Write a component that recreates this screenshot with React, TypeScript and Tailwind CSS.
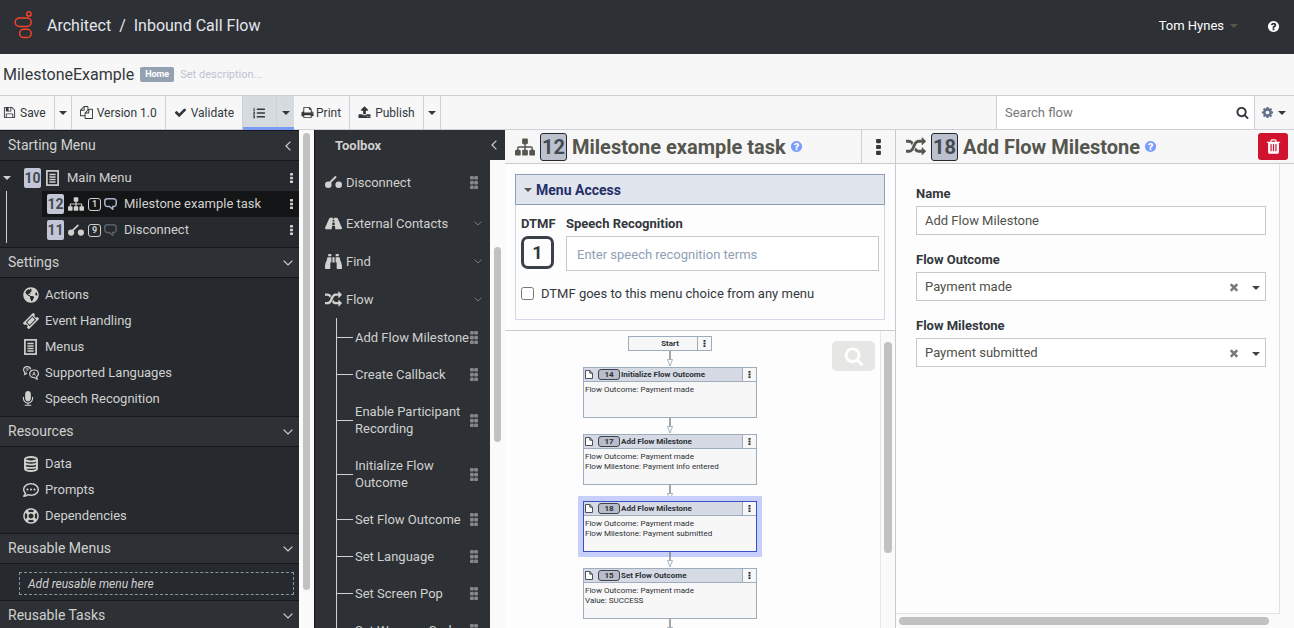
import React from "react";
import { FaGlobeAmericas, FaRoad, FaBinoculars, FaRegLifeRing, FaListOl, FaRegCommentDots } from "react-icons/fa";

type IconProps = { className?: string };

const glyphs = {
  search:
    "M1216 832q0-185-131.5-316.5T768 384 451.5 515.5 320 832t131.5 316.5T768 1280t316.5-131.5T1216 832zm512 832q0 52-38 90t-90 38q-54 0-90-38l-343-342q-179 124-399 124-143 0-273.5-55.5t-225-150-150-225T64 832t55.5-273.5 150-225 225-150T768 128t273.5 55.5 225 150 150 225T1472 832q0 220-124 399l343 343q37 37 37 90z",
  times:
    "M1490 1322q0 40-28 68l-136 136q-28 28-68 28t-68-28l-294-294-294 294q-28 28-68 28t-68-28l-136-136q-28-28-28-68t28-68l294-294-294-294q-28-28-28-68t28-68l136-136q28-28 68-28t68 28l294 294 294-294q28-28 68-28t68 28l136 136q28 28 28 68t-28 68l-294 294 294 294q28 28 28 68z",
  random:
    "M666 481q-60 92-137 273-22-45-37-72.5t-40.5-63.5-51-56.5-63-35-81.5-14.5h-224q-14 0-23-9t-9-23v-192q0-14 9-23t23-9h224q250 0 410 225zm1126 799q0 14-9 23l-320 320q-9 9-23 9-13 0-22.5-9.5t-9.5-22.5v-192q-32 0-85 .5t-81 1-73-1-71-5-64-10.5-63-18.5-58-28.5-59-40-55-53.5-56-69.5q59-93 136-273 22 45 37 72.5t40.5 63.5 51 56.5 63 35 81.5 14.5h256v-192q0-14 9-23t23-9q12 0 24 10l319 319q9 9 9 23zm0-896q0 14-9 23l-320 320q-9 9-23 9-13 0-22.5-9.5t-9.5-22.5v-192h-256q-48 0-87 15t-69 45-51 61.5-45 77.5q-32 62-78 171-29 66-49.5 111t-54 105-64 100-74 83-90 68.5-106.5 42-128 16.5h-224q-14 0-23-9t-9-23v-192q0-14 9-23t23-9h224q48 0 87-15t69-45 51-61.5 45-77.5q32-62 78-171 29-66 49.5-111t54-105 64-100 74-83 90-68.5 106.5-42 128-16.5h256v-192q0-14 9-23t23-9q12 0 24 10l319 319q9 9 9 23z",
  sitemap:
    "M1792 1248v320q0 40-28 68t-68 28h-320q-40 0-68-28t-28-68v-320q0-40 28-68t68-28h96v-192h-512v192h96q40 0 68 28t28 68v320q0 40-28 68t-68 28h-320q-40 0-68-28t-28-68v-320q0-40 28-68t68-28h96v-192h-512v192h96q40 0 68 28t28 68v320q0 40-28 68t-68 28h-320q-40 0-68-28t-28-68v-320q0-40 28-68t68-28h96v-192q0-52 38-90t90-38h512v-192h-96q-40 0-68-28t-28-68v-320q0-40 28-68t68-28h320q40 0 68 28t28 68v320q0 40-28 68t-68 28h-96v192h512q52 0 90 38t38 90v192h96q40 0 68 28t28 68z",
  help: "M1024 1376v-192q0-14-9-23t-23-9h-192q-14 0-23 9t-9 23v192q0 14 9 23t23 9h192q14 0 23-9t9-23zm256-672q0-88-55.5-163t-138.5-116-170-41q-243 0-371 213-15 24 8 42l132 100q7 6 19 6 16 0 25-12 53-68 86-92 34-24 86-24 48 0 85.5 26t37.5 59q0 38-20 61t-68 45q-63 28-115.5 86.5t-52.5 125.5v36q0 14 9 23t23 9h192q14 0 23-9t9-23q0-19 21.5-49.5t54.5-49.5q32-18 49-28.5t46-35 44.5-48 28-60.5 12.5-81zm384 192q0 209-103 385.5t-279.5 279.5-385.5 103-385.5-103-279.5-279.5-103-385.5 103-385.5 279.5-279.5 385.5-103 385.5 103 279.5 279.5 103 385.5z",
  trash:
    "M704 1376v-704q0-14-9-23t-23-9h-64q-14 0-23 9t-9 23v704q0 14 9 23t23 9h64q14 0 23-9t9-23zm256 0v-704q0-14-9-23t-23-9h-64q-14 0-23 9t-9 23v704q0 14 9 23t23 9h64q14 0 23-9t9-23zm256 0v-704q0-14-9-23t-23-9h-64q-14 0-23 9t-9 23v704q0 14 9 23t23 9h64q14 0 23-9t9-23zm-544-992h448l-48-117q-7-9-17-11h-317q-10 2-17 11zm928 32v64q0 14-9 23t-23 9h-96v948q0 83-47 143.5t-113 60.5h-832q-66 0-113-58.5t-47-141.5v-952h-96q-14 0-23-9t-9-23v-64q0-14 9-23t23-9h309l70-167q15-37 54-63t79-26h320q40 0 79 26t54 63l70 167h309q14 0 23 9t9 23z",
  check:
    "M1671 566q0 40-28 68l-724 724-136 136q-28 28-68 28t-68-28l-136-136-362-362q-28-28-28-68t28-68l136-136q28-28 68-28t68 28l294 295 656-657q28-28 68-28t68 28l136 136q28 28 28 68z",
  upload:
    "M1344 1472q0-26-19-45t-45-19-45 19-19 45 19 45 45 19 45-19 19-45zm256 0q0-26-19-45t-45-19-45 19-19 45 19 45 45 19 45-19 19-45zm128-224v320q0 40-28 68t-68 28h-1472q-40 0-68-28t-28-68v-320q0-40 28-68t68-28h427q21 56 70.5 92t110.5 36h256q61 0 110.5-36t70.5-92h427q40 0 68 28t28 68zm-325-648q-17 40-59 40h-256v448q0 26-19 45t-45 19h-256q-26 0-45-19t-19-45v-448h-256q-42 0-59-40-17-39 14-69l448-448q18-19 45-19t45 19l448 448q31 30 14 69z",
  save: "M512 1536h768v-384h-768v384zm896 0h128v-896q0-14-10-38.5t-20-34.5l-281-281q-10-10-34-20t-39-10v416q0 40-28 68t-68 28h-576q-40 0-68-28t-28-68v-416h-128v1280h128v-416q0-40 28-68t68-28h832q40 0 68 28t28 68v416zm-384-928v-320q0-13-9.5-22.5t-22.5-9.5h-192q-13 0-22.5 9.5t-9.5 22.5v320q0 13 9.5 22.5t22.5 9.5h192q13 0 22.5-9.5t9.5-22.5zm640 32v928q0 40-28 68t-68 28h-1344q-40 0-68-28t-28-68v-1344q0-40 28-68t68-28h928q40 0 88 20t76 48l280 280q28 28 48 76t20 88z",
  print:
    "M448 1536h896v-256h-896v256zm0-640h896v-384h-160q-40 0-68-28t-28-68v-160h-640v640zm1152 64q0-26-19-45t-45-19-45 19-19 45 19 45 45 19 45-19 19-45zm128 0v416q0 13-9.5 22.5t-22.5 9.5h-224v160q0 40-28 68t-68 28h-960q-40 0-68-28t-28-68v-160h-224q-13 0-22.5-9.5t-9.5-22.5v-416q0-79 56.5-135.5t135.5-56.5h64v-544q0-40 28-68t68-28h672q40 0 88 20t76 48l152 152q28 28 48 76t20 88v256h64q79 0 135.5 56.5t56.5 135.5z",
  files:
    "M1696 384q40 0 68 28t28 68v1216q0 40-28 68t-68 28h-960q-40 0-68-28t-28-68v-288h-544q-40 0-68-28t-28-68v-672q0-40 20-88t48-76l408-408q28-28 76-48t88-20h416q40 0 68 28t28 68v328q68-40 128-40h416zm-544 213l-299 299h299v-299zm-640-384l-299 299h299v-299zm196 647l316-316v-416h-384v416q0 40-28 68t-68 28h-416v640h512v-256q0-40 20-88t48-76zm956 804v-1152h-384v416q0 40-28 68t-68 28h-416v640h896z",
  cog: "M1152 896q0-106-75-181t-181-75-181 75-75 181 75 181 181 75 181-75 75-181zm512-109v222q0 12-8 23t-20 13l-185 28q-19 54-39 91 35 50 107 138 10 12 10 25t-9 23q-27 37-99 108t-94 71q-12 0-26-9l-138-108q-44 23-91 38-16 136-29 186-7 28-36 28h-222q-14 0-24.5-8.5t-11.5-21.5l-28-184q-49-16-90-37l-141 107q-10 9-25 9-14 0-25-11-126-114-165-168-7-10-7-23 0-12 8-23 15-21 51-66.5t54-70.5q-27-50-41-99l-183-27q-13-2-21-12.5t-8-23.5v-222q0-12 8-23t19-13l186-28q14-46 39-92-40-57-107-138-10-12-10-24 0-10 9-23 26-36 98.5-107.5t94.5-71.5q13 0 26 10l138 107q44-23 91-38 16-136 29-186 7-28 36-28h222q14 0 24.5 8.5t11.5 21.5l28 184q49 16 90 37l142-107q9-9 24-9 13 0 25 10 129 119 165 170 7 8 7 22 0 12-8 23-15 21-51 66.5t-54 70.5q26 50 41 98l183 28q13 2 21 12.5t8 23.5z",
  microphone:
    "M1472 704v128q0 221-147.5 384.5t-364.5 187.5v132h256q26 0 45 19t19 45-19 45-45 19h-640q-26 0-45-19t-19-45 19-45 45-19h256v-132q-217-24-364.5-187.5t-147.5-384.5v-128q0-26 19-45t45-19 45 19 19 45v128q0 185 131.5 316.5t316.5 131.5 316.5-131.5 131.5-316.5v-128q0-26 19-45t45-19 45 19 19 45zm-256-384v512q0 132-94 226t-226 94-226-94-94-226v-512q0-132 94-226t226-94 226 94 94 226z",
};

function Glyph({ name, className }: { name: keyof typeof glyphs; className?: string }) {
  return (
    <svg viewBox="0 0 1792 1792" fill="currentColor" aria-hidden="true" className={className}>
      <path d={glyphs[name]} />
    </svg>
  );
}

function Logo() {
  return (
    <svg viewBox="0 0 20 30" fill="none" stroke="#f5432a" strokeWidth="1.5" className="h-[30px] w-5 shrink-0" aria-hidden="true">
      <circle cx="15.900" cy="2.900" r="2.200" />
      <rect x="2.200" y="7" width="16" height="8.400" rx="4.200" />
      <rect x="6.600" y="18.200" width="11.600" height="8.400" rx="4.200" />
    </svg>
  );
}

function Caret({ className = "" }: IconProps) {
  return (
    <svg viewBox="0 0 8 4" fill="currentColor" className={"h-1 w-2 shrink-0 " + className} aria-hidden="true">
      <path d="M0 0h8L4 4z" />
    </svg>
  );
}

function Chevron({ className = "" }: IconProps) {
  return (
    <svg viewBox="0 0 10 6" fill="none" stroke="currentColor" strokeWidth="1.2" className={"shrink-0 " + className} aria-hidden="true">
      <path d="M.6.6 5 5 9.4.6" />
    </svg>
  );
}

function ChevronLeft() {
  return (
    <svg viewBox="0 0 6 10" fill="none" stroke="currentColor" strokeWidth="1.2" className="h-[10px] w-[6px] shrink-0" aria-hidden="true">
      <path d="M5.4.6 1 5l4.4 4.4" />
    </svg>
  );
}

function Dots({ className = "h-[10px] w-[3px]" }: IconProps) {
  return (
    <svg viewBox="0 0 3 10" fill="currentColor" className={"shrink-0 " + className} aria-hidden="true">
      <rect width="3" height="2.6" rx=".5" />
      <rect y="3.7" width="3" height="2.6" rx=".5" />
      <rect y="7.4" width="3" height="2.6" rx=".5" />
    </svg>
  );
}

function Grip() {
  return (
    <svg viewBox="0 0 8 13" fill="#85888a" className="h-[13px] w-2 shrink-0" aria-hidden="true">
      {[0, 4.8, 9.6].map((y) => (
        <g key={y}>
          <rect y={y} width="3.8" height="3.6" rx="1.2" />
          <rect x="4.200" y={y} width="3.8" height="3.6" rx="1.2" />
        </g>
      ))}
    </svg>
  );
}

function MenuIcon({ className = "" }: IconProps) {
  return (
    <svg viewBox="0 0 13 16" fill="none" stroke="currentColor" className={className} aria-hidden="true">
      <rect x=".9" y=".9" width="11.200" height="14.200" strokeWidth="1.7" />
      <path d="M3.4 4.500h6.200M3.400 7h6.200M3.400 9.500h6.200M3.400 12h6.200" strokeWidth="1.300" />
    </svg>
  );
}

function TicketIcon({ className = "" }: IconProps) {
  return (
    <svg viewBox="0 0 16 16" className={className} aria-hidden="true">
      <g transform="rotate(-45 8 8)">
        <path
          fill="currentColor"
          fillRule="evenodd"
          d="M.6 3.700h14.800v2.600a1.700 1.700 0 0 0 0 3.400v2.600H.6V9.700a1.700 1.700 0 0 0 0-3.400zM3.400 5.300v5.400h9.200V5.300zM4.300 6.200h7.400v3.600H4.300z"
        />
      </g>
    </svg>
  );
}

function LanguagesIcon({ className = "" }: IconProps) {
  return (
    <svg viewBox="0 0 16 14" fill="none" stroke="currentColor" strokeWidth="1.2" className={className} aria-hidden="true">
      <path d="M7.600 3.400C7.300 1.700 5.900.7 4.100.7 2.100.7.6 2 .6 3.900c0 1 .5 1.800 1.300 2.400L1.600 8.400 4 7.100" />
      <path d="M2.600 3h3M4.100 2.200v.8M5.300 3c-.4 1.300-1.300 2-2.300 2.300" strokeWidth=".8" />
      <path d="M11 4c2.500 0 4.400 1.500 4.400 3.700 0 1.300-.7 2.300-1.800 3l.5 2.500-2.900-1.700c-2.500 0-4.500-1.500-4.500-3.800S8.500 4 11 4z" />
      <path d="M9.600 9.500 11 5.900l1.400 3.600M10.100 8.400h1.800" strokeWidth=".8" />
    </svg>
  );
}

function DatabaseIcon({ className = "" }: IconProps) {
  return (
    <svg viewBox="0 0 14 16" fill="none" stroke="currentColor" strokeWidth="1.900" className={className} aria-hidden="true">
      <ellipse cx="7" cy="3.200" rx="6" ry="2.200" />
      <path d="M1 3.200v9.600c0 1.200 2.700 2.200 6 2.200s6-1 6-2.200V3.200M1 6.600c0 1.200 2.700 2 6 2s6-.8 6-2M1 9.900c0 1.200 2.700 2 6 2s6-.8 6-2" />
    </svg>
  );
}

function DisconnectIcon({ className = "" }: IconProps) {
  return (
    <svg viewBox="0 0 17 12" fill="currentColor" className={className} aria-hidden="true">
      <circle cx="3.300" cy="8.700" r="3.300" />
      <circle cx="13.700" cy="8.700" r="3.300" />
      <path d="M4 7.500 10.500 1" stroke="currentColor" strokeWidth="1.800" strokeLinecap="round" />
    </svg>
  );
}

function SpeechIcon({ className = "" }: IconProps) {
  return (
    <svg viewBox="0 0 13 12" fill="none" stroke="currentColor" strokeWidth="1.500" className={"shrink-0 " + className} aria-hidden="true">
      <path d="M3.300.8h6.400a2.500 2.500 0 0 1 2.500 2.500v2.600a2.500 2.500 0 0 1-2.500 2.500H8.700v2.800L5.500 8.400H3.300A2.500 2.500 0 0 1 .8 5.900V3.300A2.500 2.500 0 0 1 3.300.8z" />
    </svg>
  );
}

function DocIcon() {
  return (
    <svg viewBox="0 0 8 9" fill="#fff" stroke="#3a3f46" strokeWidth=".9" className="h-[9px] w-2 shrink-0" aria-hidden="true">
      <path d="M.5.5h4.300l2.700 2.700v5.300h-7zM4.800.5v2.700h2.700" />
    </svg>
  );
}

function SmallBadge({ children }: { children: string }) {
  return (
    <span className="flex h-5 w-[17px] shrink-0 items-center justify-center rounded-xs bg-[#c2c6d6] text-sm font-bold text-[#444a52]">
      {children}
    </span>
  );
}

function BigBadge({ children }: { children: string }) {
  return (
    <span className="flex h-7 w-[27px] shrink-0 items-center justify-center rounded-[3px] border border-[#23282e] bg-[#bcc1ce] text-xl font-bold text-[#444a52]">
      {children}
    </span>
  );
}

function Digit({ children }: { children: string }) {
  return (
    <span className="flex size-[13px] shrink-0 items-center justify-center rounded-[3px] border border-[#cfcfcd] text-[9px] leading-none font-bold">
      {children}
    </span>
  );
}

function SectionHeader({ title, start }: { title: string; start?: boolean }) {
  return (
    <button type="button" className="flex h-[31px] w-full shrink-0 items-center justify-between border-y border-[#15171a] bg-[#2d3035] pr-[6px] pl-2 text-sm">
      <span className="pb-[2px]">{title}</span>
      {start ? <span className="pr-[2px]"><ChevronLeft /></span> : <Chevron className="h-[6px] w-[10px]" />}
    </button>
  );
}

function NavItem({ icon, label }: { icon: React.ReactNode; label: string }) {
  return (
    <li>
      <a href="#" className="flex h-[26px] items-center gap-[6px] pl-[23px]">
        <span className="flex w-4 shrink-0">{icon}</span>
        {label}
      </a>
    </li>
  );
}

function Sidebar() {
  return (
    <nav aria-label="Flow" className="flex w-[299px] shrink-0 flex-col overflow-hidden bg-[#26292e] text-[13px] text-[#d0d0ce]">
      <SectionHeader title="Starting Menu" start />
      <div className="py-1">
        <div className="flex h-[26px] items-center pr-[6px] pl-[3px]">
          <Caret />
          <span className="ml-[13px] flex"><SmallBadge>10</SmallBadge></span>
          <MenuIcon className="ml-[5px] h-4 w-[13px]" />
          <span className="ml-2 grow">Main Menu</span>
          <Dots />
        </div>
        <div className="ml-[6px] border-l border-[#d0d0ce] pl-[35px]">
          <div className="flex h-[26px] items-center bg-[#141517] pr-[6px] pl-[5px]">
            <SmallBadge>12</SmallBadge>
            <Glyph name="sitemap" className="ml-1 size-4" />
            <span className="ml-1"><Digit>1</Digit></span>
            <SpeechIcon className="ml-[3px] h-3 w-[13px] text-[#a7b5cb]" />
            <span className="ml-[7px] grow">Milestone example task</span>
            <Dots />
          </div>
          <div className="flex h-[26px] items-center pr-[6px] pl-[5px]">
            <SmallBadge>11</SmallBadge>
            <DisconnectIcon className="ml-1 h-3 w-4" />
            <span className="ml-1"><Digit>9</Digit></span>
            <SpeechIcon className="ml-[3px] h-3 w-[13px] text-[#596069]" />
            <span className="ml-[7px] grow">Disconnect</span>
            <Dots />
          </div>
        </div>
      </div>
      <SectionHeader title="Settings" />
      <ul className="py-1">
        <NavItem icon={<FaGlobeAmericas className="size-4" />} label="Actions" />
        <NavItem icon={<TicketIcon className="size-4" />} label="Event Handling" />
        <NavItem icon={<MenuIcon className="ml-px h-4 w-[13px]" />} label="Menus" />
        <NavItem icon={<LanguagesIcon className="h-[14px] w-4" />} label="Supported Languages" />
        <NavItem icon={<Glyph name="microphone" className="-ml-[3px] size-4" />} label="Speech Recognition" />
      </ul>
      <SectionHeader title="Resources" />
      <ul className="py-1">
        <NavItem icon={<DatabaseIcon className="ml-px h-4 w-[14px]" />} label="Data" />
        <NavItem icon={<FaRegCommentDots className="size-4" />} label="Prompts" />
        <NavItem icon={<FaRegLifeRing className="size-4" />} label="Dependencies" />
      </ul>
      <SectionHeader title="Reusable Menus" />
      <div className="pt-2 pr-[5px] pb-[5px] pl-[19px]">
        <div className="flex h-[23px] items-center border border-dashed border-[#8a95a3] pl-2 text-xs italic">Add reusable menu here</div>
      </div>
      <SectionHeader title="Reusable Tasks" />
    </nav>
  );
}

function ToolboxGroup({ icon, label, end }: { icon: React.ReactNode; label: string; end: React.ReactNode }) {
  return (
    <div className="flex h-[38px] shrink-0 items-center gap-1 pr-2 pl-[10px]">
      <span className="flex w-[17px] shrink-0 justify-center">{icon}</span>
      <span className="grow">{label}</span>
      {end}
    </div>
  );
}

const tools = [
  "Add Flow Milestone",
  "Create Callback",
  "Enable Participant Recording",
  "Initialize Flow Outcome",
  "Set Flow Outcome",
  "Set Language",
  "Set Screen Pop",
  "Set Wrap-up Code",
];

function Toolbox() {
  const chevron = <Chevron className="h-[5px] w-2 text-[#7c8084]" />;
  return (
    <aside className="flex w-[191px] shrink-0 flex-col text-[13px] leading-[17px] text-[#d0d0ce]">
      <div className="flex h-[30px] shrink-0 items-center justify-between border-l border-[#15171a] bg-[#2d3035] pr-2 pl-5">
        <h2 className="font-bold">Toolbox</h2>
        <ChevronLeft />
      </div>
      <div className="flex min-h-0 grow">
        <div className="flex min-w-0 grow flex-col overflow-hidden border-l border-[#15171a] bg-[#2d3035]">
          <div className="py-[3px]">
            <ToolboxGroup icon={<DisconnectIcon className="h-3 w-[17px]" />} label="Disconnect" end={<span className="pr-1"><Grip /></span>} />
          </div>
          <ToolboxGroup icon={<FaRoad className="size-[17px]" />} label="External Contacts" end={chevron} />
          <ToolboxGroup icon={<FaBinoculars className="size-[17px]" />} label="Find" end={chevron} />
          <ToolboxGroup icon={<Glyph name="random" className="size-[17px]" />} label="Flow" end={chevron} />
          <ul className="ml-[21px] border-l border-[#d0d0ce] pt-px">
            {tools.map((t) => (
              <li key={t} className="flex items-center py-[10px] pr-3">
                <span className="h-px w-4 shrink-0 bg-[#d0d0ce]" />
                <span className="ml-[2px] w-[115px] shrink-0">{t}</span>
                <Grip />
              </li>
            ))}
          </ul>
        </div>
        <div className="w-[15px] shrink-0 bg-[#fafafa] px-1 pt-[87px]">
          <div className="h-[195px] rounded-full bg-[#c1c1c1]" />
        </div>
      </div>
    </aside>
  );
}

function ToolButton({ children, label, className = "gap-1 px-2" }: { children: React.ReactNode; label?: string; className?: string }) {
  return (
    <button type="button" aria-label={label} className={"flex items-center border-r border-[#cdd2da] " + className}>
      {children}
    </button>
  );
}

function Toolbar() {
  return (
    <div className="flex h-[35px] shrink-0 border-y border-[#cdd0d6] text-xs text-[#33383d]">
      <ToolButton className="gap-1 pr-2 pl-[3px]">
        <Glyph name="save" className="size-[13px]" />
        Save
      </ToolButton>
      <ToolButton className="px-1" label="Save options"><Caret /></ToolButton>
      <ToolButton><Glyph name="files" className="size-[13px]" />Version 1.0</ToolButton>
      <ToolButton><Glyph name="check" className="size-[13px]" />Validate</ToolButton>
      <div className="-mb-px flex border-b-[3px] border-[#7a9bf5] bg-[#d6dbe0]">
        <ToolButton className="pr-[11px] pl-[10px] pt-[2px]" label="View list"><FaListOl className="size-3" /></ToolButton>
        <button type="button" aria-label="View options" className="flex items-center pt-[2px] pr-1 pl-[5px]"><Caret /></button>
      </div>
      <ToolButton className="gap-[2px] pr-2 pl-[7px]"><Glyph name="print" className="size-[13px]" />Print</ToolButton>
      <ToolButton><Glyph name="upload" className="size-[13px]" />Publish</ToolButton>
      <ToolButton className="px-1" label="Publish options"><Caret /></ToolButton>
      <label className="ml-auto flex w-[259px] items-center border-x border-[#cdd2da] bg-white pr-[5px] pl-2 text-[13px]">
        <input type="search" placeholder="Search flow" aria-label="Search flow" className="min-w-0 grow outline-none placeholder:text-[#777]" />
        <Glyph name="search" className="size-[13px]" />
      </label>
      <button type="button" aria-label="Settings" className="flex items-center gap-1 pr-2 pl-[6px]">
        <Glyph name="cog" className="size-[13px] text-[#62708a]" />
        <Caret />
      </button>
    </div>
  );
}

function PanelTitle({ icon, badge, title }: { icon: keyof typeof glyphs; badge: string; title: string }) {
  return (
    <div className="flex items-center pl-[10px] text-[#55564d]">
      <Glyph name={icon} className="size-5" />
      <span className="ml-[5px]"><BigBadge>{badge}</BigBadge></span>
      <h2 className="ml-[5px] text-xl leading-7 font-bold">{title}</h2>
      <Glyph name="help" className="ml-1 size-[13px] text-[#7a9bff]" />
    </div>
  );
}

function MenuAccess() {
  return (
    <section className="m-[10px] flex h-[146px] shrink-0 flex-col border border-[#d2d8e8] text-[13px]">
      <h3 className="-mx-px -mt-px flex h-[31px] shrink-0 items-center gap-1 border border-[#8d9db5] bg-[#e1e5ee] pl-2 text-sm font-bold text-[#242f68]">
        <Caret className="text-[#55564d]" />
        Menu Access
      </h3>
      <div className="flex gap-3 px-[5px] pt-[10px]">
        <div className="flex w-[33px] shrink-0 flex-col gap-1">
          <span className="leading-[17px] font-bold">DTMF</span>
          <button type="button" className="flex size-[33px] items-center justify-center rounded-[7px] border-[3px] border-[#3b4148] text-lg font-bold">1</button>
        </div>
        <div className="flex grow flex-col gap-1">
          <label htmlFor="terms" className="leading-[17px] font-bold">Speech Recognition</label>
          <input id="terms" placeholder="Enter speech recognition terms" className="h-[35px] border border-[#c8c8c8] bg-white px-[10px] pt-px outline-none placeholder:text-[#8fa0b5]" />
        </div>
      </div>
      <label className="mt-[13px] flex items-center gap-[7px] pl-[5px]">
        <input type="checkbox" className="size-[13px]" />
        DTMF goes to this menu choice from any menu
      </label>
    </section>
  );
}

function Connector() {
  return (
    <svg viewBox="0 0 8 16" className="h-4 w-2" aria-hidden="true">
      <path d="M4 0v9" stroke="#84898d" strokeWidth="1.500" />
      <path d="M1.500 8.500h5L4 15z" fill="#fff" stroke="#9aabb9" strokeWidth=".9" />
    </svg>
  );
}

function FlowNode({ id, title, lines, selected }: { id: string; title: string; lines: string[]; selected?: boolean }) {
  return (
    <div className={"h-[51px] w-[174px] border bg-[#f7f7f7] " + (selected ? "border-[#3c4fc4] outline-5 outline-[#c6d0fb]" : "border-[#9dadbd]")}>
      <div className="flex h-[14px] items-center border-b border-[#9dadbd] bg-[#d5dae5] pl-px font-bold">
        <DocIcon />
        <span className="ml-[5px] flex h-[11px] w-[22px] items-center justify-center rounded-[3px] border border-[#3f444b] bg-[#b9bccb]">{id}</span>
        <span className="grow pl-px">{title}</span>
        <button type="button" aria-label="Node menu" className="flex h-[13px] w-[14px] items-center justify-center border-l border-[#9dadbd] bg-[#f7f7f7]">
          <Dots className="h-[7px] w-[3px]" />
        </button>
      </div>
      <div className="px-px pt-[3px]">
        {lines.map((l) => <p key={l}>{l}</p>)}
      </div>
    </div>
  );
}

const nodes = [
  { id: "14", title: "Initialize Flow Outcome", lines: ["Flow Outcome: Payment made"] },
  { id: "17", title: "Add Flow Milestone", lines: ["Flow Outcome: Payment made", "Flow Milestone: Payment info entered"] },
  { id: "18", title: "Add Flow Milestone", lines: ["Flow Outcome: Payment made", "Flow Milestone: Payment submitted"], selected: true },
  { id: "15", title: "Set Flow Outcome", lines: ["Flow Outcome: Payment made", "Value: SUCCESS"] },
];

function Canvas() {
  return (
    <div className="flex min-h-0 grow border-t border-[#c9cacc]">
      <div className="relative min-w-0 grow overflow-hidden pt-[5px] pl-[78px]">
        <div className="flex w-[174px] flex-col items-center text-[8px] leading-[10px] text-[#2b3035]">
          <div className="flex h-[15px] w-[84px] border border-[#9dadbd] bg-[#f7f7f7] font-bold">
            <span className="flex grow items-center justify-center pl-[14px]">Start</span>
            <button type="button" aria-label="Start menu" className="flex w-[14px] items-center justify-center border-l border-[#9dadbd]">
              <Dots className="h-[7px] w-[3px]" />
            </button>
          </div>
          <Connector />
          {nodes.map((n) => (
            <React.Fragment key={n.id}>
              <FlowNode {...n} />
              <Connector />
            </React.Fragment>
          ))}
        </div>
        <button type="button" aria-label="Zoom" className="absolute top-[10px] right-[5px] flex h-[30px] w-[43px] items-center justify-center rounded-[5px] bg-[#e6e6e5] text-white">
          <Glyph name="search" className="size-5" />
        </button>
      </div>
      <div className="w-[15px] shrink-0 border-l border-[#e6e6e6] bg-[#fafafa] pt-[11px] pr-[3px] pl-[3px]">
        <div className="h-[211px] rounded-full bg-[#c1c1c1]" />
      </div>
    </div>
  );
}

function Dropdown({ id, label, value }: { id: string; label: string; value: string }) {
  return (
    <div className="flex flex-col gap-1">
      <label htmlFor={id} className="leading-[17px] font-bold text-[#33383d]">{label}</label>
      <div className="relative flex h-[29px] border border-[#c8c8c8] bg-white">
        <select id={id} defaultValue={value} className="w-full appearance-none px-2 pt-px outline-none">
          <option>{value}</option>
        </select>
        <button type="button" aria-label={"Clear " + label} className="absolute top-[8px] right-[25px] text-[#7c7c7c]">
          <Glyph name="times" className="size-3" />
        </button>
        <Caret className="pointer-events-none absolute top-[13px] right-[5px] text-[#44453d]" />
      </div>
    </div>
  );
}

function Details() {
  return (
    <section className="flex w-[399px] shrink-0 flex-col border-l border-[#c9cacc] bg-[#fafafa]">
      <header className="flex h-[34px] shrink-0 items-center justify-between border-b border-[#c9cacc] bg-[#f7f7f7] pr-[6px]">
        <PanelTitle icon="random" badge="18" title="Add Flow Milestone" />
        <button type="button" aria-label="Delete" className="flex h-[27px] w-[30px] items-center justify-center rounded-[3px] bg-[#d0142f] text-white">
          <Glyph name="trash" className="size-[17px]" />
        </button>
      </header>
      <form className="mr-[14px] flex grow flex-col gap-4 border-r border-b border-[#e3e3e3] bg-[#fdfdfd] pt-[21px] pr-[13px] pl-5 text-[13px] text-[#50514a]">
        <div className="flex flex-col gap-1">
          <label htmlFor="name" className="leading-[17px] font-bold text-[#33383d]">Name</label>
          <input id="name" defaultValue="Add Flow Milestone" className="h-[29px] border border-[#c8c8c8] bg-white px-2 outline-none" />
        </div>
        <Dropdown id="outcome" label="Flow Outcome" value="Payment made" />
        <Dropdown id="milestone" label="Flow Milestone" value="Payment submitted" />
      </form>
      <div className="shrink-0 pt-[3px] pr-[25px] pb-[3px] pl-[3px]">
        <div className="h-2 rounded-full bg-[#c1c1c1]" />
      </div>
    </section>
  );
}

export default function App() {
  return (
    <div className="flex h-screen flex-col overflow-hidden bg-[#f7f7f7] font-['Roboto',sans-serif] text-[#33383d]">
      <header className="flex h-[54px] shrink-0 items-center bg-[#2d3035] pr-[14px] pb-[2px] pl-[13px] text-[#e3e5ec]">
        <Logo />
        <h1 className="ml-[14px] flex gap-2 text-base">
          <span>Architect</span>
          <span>/</span>
          <span>Inbound Call Flow</span>
        </h1>
        <button type="button" className="ml-auto flex items-center gap-[6px] text-[13px] text-white">
          Tom Hynes
          <Caret className="text-[#55564d]" />
        </button>
        <button type="button" aria-label="Help" className="ml-[29px] text-white">
          <Glyph name="help" className="size-[13px]" />
        </button>
      </header>
      <div className="flex h-[41px] shrink-0 items-center gap-[6px] pl-[3px]">
        <span className="text-base">MilestoneExample</span>
        <span className="flex h-[15px] items-center rounded-xs bg-[#94a1b3] px-[5px] text-[9px] font-bold text-white">Home</span>
        <a href="#" className="pt-[2px] text-[11px] text-[#bcc4d3]">Set description...</a>
      </div>
      <Toolbar />
      <div className="flex min-h-0 grow">
        <Sidebar />
        <div className="w-[15px] shrink-0 bg-[#fafafa] px-1 pt-[3px]">
          <div className="h-[457px] rounded-full bg-[#c1c1c1]" />
        </div>
        <Toolbox />
        <main className="flex min-w-0 grow flex-col bg-[#fdfdfd]">
          <header className="flex h-[34px] shrink-0 justify-between border-b border-[#c9cacc] bg-[#f7f7f7]">
            <PanelTitle icon="sitemap" badge="12" title="Milestone example task" />
            <button type="button" aria-label="Task menu" className="flex w-[34px] items-center justify-center border-l border-[#cdd2da]">
              <Dots className="h-4 w-[5px]" />
            </button>
          </header>
          <MenuAccess />
          <Canvas />
        </main>
        <Details />
      </div>
    </div>
  );
}
